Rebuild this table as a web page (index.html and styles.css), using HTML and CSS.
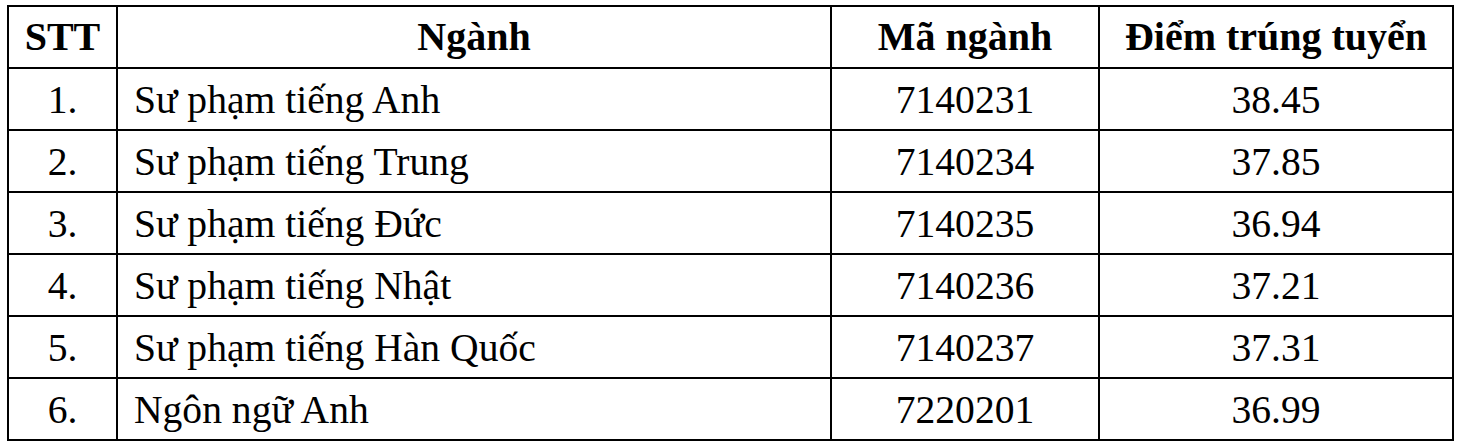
FILE: index.html
```html
<!DOCTYPE html>
<html lang="vi">
<head>
<meta charset="utf-8">
<link rel="stylesheet" href="styles.css">
</head>
<body>
<table class="scores">
  <colgroup>
    <col class="c-stt">
    <col class="c-name">
    <col class="c-code">
    <col class="c-score">
  </colgroup>
  <thead>
    <tr><th>STT</th><th>Ngành</th><th>Mã ngành</th><th>Điểm trúng tuyển</th></tr>
  </thead>
  <tbody>
    <tr><td class="ctr">1.</td><td class="name">Sư phạm tiếng Anh</td><td class="ctr">7140231</td><td class="ctr">38.45</td></tr>
    <tr><td class="ctr">2.</td><td class="name">Sư phạm tiếng Trung</td><td class="ctr">7140234</td><td class="ctr">37.85</td></tr>
    <tr><td class="ctr">3.</td><td class="name">Sư phạm tiếng Đức</td><td class="ctr">7140235</td><td class="ctr">36.94</td></tr>
    <tr><td class="ctr">4.</td><td class="name">Sư phạm tiếng Nhật</td><td class="ctr">7140236</td><td class="ctr">37.21</td></tr>
    <tr><td class="ctr">5.</td><td class="name">Sư phạm tiếng Hàn Quốc</td><td class="ctr">7140237</td><td class="ctr">37.31</td></tr>
    <tr><td class="ctr">6.</td><td class="name">Ngôn ngữ Anh</td><td class="ctr">7220201</td><td class="ctr">36.99</td></tr>
  </tbody>
</table>
</body>
</html>
```
FILE: styles.css
```css
html, body {
  margin: 0;
  background: #ffffff;
}
body {
  padding: 5px 0 0 7px;
  font-family: "Liberation Serif", "Times New Roman", serif;
  color: #000000;
}
.scores {
  border-collapse: collapse;
  table-layout: fixed;
  width: 1447px;
  font-size: 39.6px;
}
.c-stt { width: 109px; }
.c-name { width: 714px; }
.c-code { width: 268px; }
.c-score { width: 354px; }
.scores tr { height: 62px; }
.scores th, .scores td {
  border: 2px solid #000000;
  padding: 0;
  vertical-align: middle;
  line-height: 1;
}
.scores td {
  padding-top: 3px;
}
.scores th {
  font-size: 40px;
  font-weight: bold;
  text-align: center;
}
.ctr { text-align: center; }
.name {
  text-align: left;
  padding-left: 16px !important;
}
```
